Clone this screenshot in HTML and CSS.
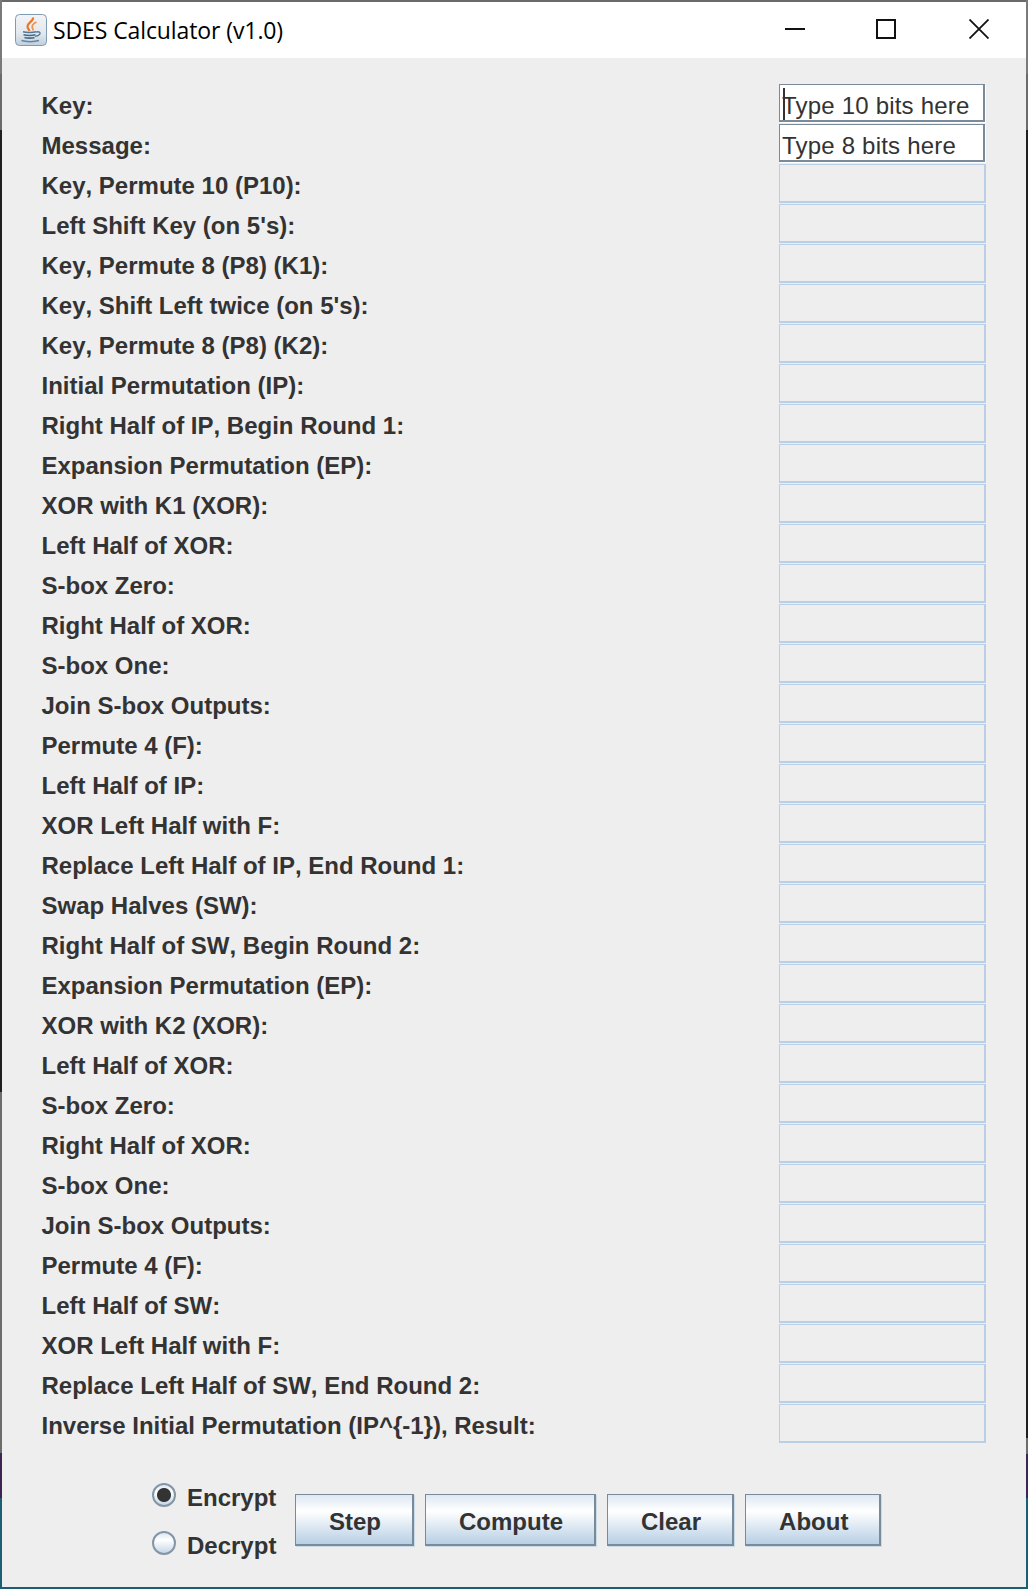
FILE: index.html
```html
<!DOCTYPE html>
<html lang="en">
<head>
<meta charset="utf-8">
<title>SDES Calculator (v1.0)</title>
<link rel="stylesheet" href="styles.css">
</head>
<body>
<div class="window">
  <header class="titlebar">
    <svg class="app-icon" viewBox="0 0 32 32" aria-hidden="true">
      <defs>
        <linearGradient id="tile" x1="0" y1="0" x2="0" y2="1">
          <stop offset="0" stop-color="#f2f4f6"/>
          <stop offset="0.6" stop-color="#e4e9ed"/>
          <stop offset="1" stop-color="#c0cfdc"/>
        </linearGradient>
      </defs>
      <rect x="0.5" y="0.5" width="31" height="31" rx="4" fill="url(#tile)" stroke="#7f9bb2"/>
      <path d="M18 3.500c1 3.500-5.500 5-5.500 9 0 2 1.500 3 2 4.500" fill="none" stroke="#e8762b" stroke-width="2.200"/>
      <path d="M21.500 8c-3 1.500-4.500 3-4.300 5 .1 1.300 1 2 1 3.500" fill="none" stroke="#ef9350" stroke-width="1.800"/>
      <path d="M8 17.800c3 1 10 1 13 0" fill="none" stroke="#4f7797" stroke-width="1.500"/>
      <path d="M8.500 20.700c3 .8 9 .8 12 0" fill="none" stroke="#45698a" stroke-width="1.500"/>
      <path d="M9.500 23.500c2.500.8 8 .8 10 0" fill="none" stroke="#45698a" stroke-width="1.600"/>
      <path d="M21 18.200c2.800-1.200 5 .2 3.600 2.200-.9 1.300-2.800 1.800-4.600 2" fill="none" stroke="#4f7797" stroke-width="1.300"/>
      <path d="M6.500 26.500c4.500 1.500 13 1.500 17.500 0" fill="none" stroke="#5f87a6" stroke-width="1.500"/>
    </svg>
    <h1 class="title">SDES Calculator (v1.0)</h1>
    <div class="controls" aria-hidden="true">
      <svg class="ctl" viewBox="0 0 20 20"><path d="M0 10h20" stroke="#111" stroke-width="2" fill="none"/></svg>
      <svg class="ctl" viewBox="0 0 20 20"><rect x="1" y="1" width="18" height="18" stroke="#111" stroke-width="2" fill="none"/></svg>
      <svg class="ctl" viewBox="0 0 20 20"><path d="M0.500 0.500l19 19M19.500 0.500l-19 19" stroke="#111" stroke-width="1.800" fill="none"/></svg>
    </div>
  </header>
  <main class="content">
    <div class="rows">
      <div class="row"><label class="lbl">Key:</label><div class="wrap"><input class="field edit" type="text" value="Type 10 bits here" aria-label="Key"><span class="caret"></span></div></div>
      <div class="row"><label class="lbl">Message:</label><div class="wrap"><input class="field edit" type="text" value="Type 8 bits here" aria-label="Message"></div></div>
      <div class="row"><label class="lbl">Key, Permute 10 (P10):</label><input class="field off" disabled></div>
      <div class="row"><label class="lbl">Left Shift Key (on 5's):</label><input class="field off" disabled></div>
      <div class="row"><label class="lbl">Key, Permute 8 (P8) (K1):</label><input class="field off" disabled></div>
      <div class="row"><label class="lbl">Key, Shift Left twice (on 5's):</label><input class="field off" disabled></div>
      <div class="row"><label class="lbl">Key, Permute 8 (P8) (K2):</label><input class="field off" disabled></div>
      <div class="row"><label class="lbl">Initial Permutation (IP):</label><input class="field off" disabled></div>
      <div class="row"><label class="lbl">Right Half of IP, Begin Round 1:</label><input class="field off" disabled></div>
      <div class="row"><label class="lbl">Expansion Permutation (EP):</label><input class="field off" disabled></div>
      <div class="row"><label class="lbl">XOR with K1 (XOR):</label><input class="field off" disabled></div>
      <div class="row"><label class="lbl">Left Half of XOR:</label><input class="field off" disabled></div>
      <div class="row"><label class="lbl">S-box Zero:</label><input class="field off" disabled></div>
      <div class="row"><label class="lbl">Right Half of XOR:</label><input class="field off" disabled></div>
      <div class="row"><label class="lbl">S-box One:</label><input class="field off" disabled></div>
      <div class="row"><label class="lbl">Join S-box Outputs:</label><input class="field off" disabled></div>
      <div class="row"><label class="lbl">Permute 4 (F):</label><input class="field off" disabled></div>
      <div class="row"><label class="lbl">Left Half of IP:</label><input class="field off" disabled></div>
      <div class="row"><label class="lbl">XOR Left Half with F:</label><input class="field off" disabled></div>
      <div class="row"><label class="lbl">Replace Left Half of IP, End Round 1:</label><input class="field off" disabled></div>
      <div class="row"><label class="lbl">Swap Halves (SW):</label><input class="field off" disabled></div>
      <div class="row"><label class="lbl">Right Half of SW, Begin Round 2:</label><input class="field off" disabled></div>
      <div class="row"><label class="lbl">Expansion Permutation (EP):</label><input class="field off" disabled></div>
      <div class="row"><label class="lbl">XOR with K2 (XOR):</label><input class="field off" disabled></div>
      <div class="row"><label class="lbl">Left Half of XOR:</label><input class="field off" disabled></div>
      <div class="row"><label class="lbl">S-box Zero:</label><input class="field off" disabled></div>
      <div class="row"><label class="lbl">Right Half of XOR:</label><input class="field off" disabled></div>
      <div class="row"><label class="lbl">S-box One:</label><input class="field off" disabled></div>
      <div class="row"><label class="lbl">Join S-box Outputs:</label><input class="field off" disabled></div>
      <div class="row"><label class="lbl">Permute 4 (F):</label><input class="field off" disabled></div>
      <div class="row"><label class="lbl">Left Half of SW:</label><input class="field off" disabled></div>
      <div class="row"><label class="lbl">XOR Left Half with F:</label><input class="field off" disabled></div>
      <div class="row"><label class="lbl">Replace Left Half of SW, End Round 2:</label><input class="field off" disabled></div>
      <div class="row"><label class="lbl">Inverse Initial Permutation (IP^{-1}), Result:</label><input class="field off" disabled></div>
    </div>
    <footer class="footer">
      <div class="modes">
        <label class="mode"><input class="radio" type="radio" name="mode" checked><span class="mode-text">Encrypt</span></label>
        <label class="mode"><input class="radio" type="radio" name="mode"><span class="mode-text">Decrypt</span></label>
      </div>
      <div class="actions">
        <button class="btn" type="button">Step</button>
        <button class="btn" type="button">Compute</button>
        <button class="btn" type="button">Clear</button>
        <button class="btn" type="button">About</button>
      </div>
    </footer>
  </main>
</div>
</body>
</html>
```
FILE: styles.css
```css
* { box-sizing: border-box; font-kerning: none; }
html, body { margin: 0; height: 1589px; overflow: hidden; }
body {
  padding: 2px;
  background-color: #6a6a6a;
  background-image:
    linear-gradient(to bottom, #7a7a7a 0 74px, #6a6a6a 74px 130px, #1f1f1f 130px 1092px, #6c6c6c 1092px 1453px, #3e2450 1453px 1498px, #1c5f75 1498px),
    linear-gradient(to bottom, #7a7a7a 0 74px, #6a6a6a 74px 130px, #1f1f1f 130px 1438px, #6c6c6c 1438px 1454px, #3e2450 1454px 1498px, #1c5f75 1498px),
    linear-gradient(#1c5f75, #1c5f75);
  background-size: 2px 100%, 2px 100%, 100% 2px;
  background-position: left top, right top, left bottom;
  background-repeat: no-repeat;
  font-family: "Liberation Sans", Arial, sans-serif;
  color: #333;
}
.window { height: 1585px; background: #eee; display: flex; flex-direction: column; }
.titlebar { height: 56px; background: #fff; display: flex; align-items: center; padding-left: 13px; }
.app-icon { width: 32px; height: 32px; flex: none; margin-top: -1px; }
.title { margin: 0 0 0 6px; font: 400 23px "Open Sans", "Noto Sans", sans-serif; letter-spacing: -0.1px; color: #000; white-space: nowrap; }
.controls { margin-left: auto; display: flex; gap: 71px; padding-right: 37px; margin-top: -3px; }
.ctl { width: 20px; height: 20px; display: block; }
.ctl:last-child { margin-left: 2px; }
.content { flex: 1; padding: 26px 40px 0 39.5px; display: flex; flex-direction: column; }
.rows { display: flex; flex-direction: column; }
.row { height: 40px; display: flex; justify-content: space-between; align-items: flex-start; }
.lbl { font-size: 24px; font-weight: 700; line-height: 44px; white-space: nowrap; }
.wrap { position: relative; display: block; width: 207px; height: 39px; }
.field { display: block; width: 207px; height: 39px; padding: 0; margin: 0; outline: 0; border-radius: 0; }
.edit {
  width: 206px; height: 38px; padding: 7px 0 0 2px;
  background: #fff; color: #333; font: 400 24px "Liberation Sans", Arial, sans-serif; letter-spacing: 0.2px;
  border-style: solid; border-color: #7a8a99; border-width: 1px 2px 2px 1px;
  box-shadow: 1px 1px 0 #fff;
}
.off { background: #eee; border-style: solid; border-color: #b8cfe5; border-width: 1px 2px 2px 1px; }
.caret { position: absolute; left: 4px; top: 4px; width: 2px; height: 32px; background: #333; }
.footer { display: flex; align-items: flex-end; margin-top: 27px; padding-left: 110.5px; }
.modes { display: flex; flex-direction: column; width: 143px; }
.mode { height: 48px; display: flex; align-items: center; gap: 11px; font-size: 24px; font-weight: 700; }
.mode-text { padding-top: 6px; }
.radio {
  appearance: none; width: 24px; height: 24px; margin: 0; flex: none; border-radius: 50%;
  border: 2px solid #8496a6;
  background: linear-gradient(to bottom, #dde8f3, #fff 35%, #c5d6e6);
}
.radio:checked { background: radial-gradient(circle, #333 0 6.5px, transparent 7.500px), linear-gradient(to bottom, #dde8f3, #fff 35%, #c5d6e6); }
.actions { display: flex; gap: 11px; margin-bottom: 21px; }
.btn {
  height: 52px; padding: 4px 31px 0 33px; font: 700 24px "Liberation Sans", Arial, sans-serif; color: #333;
  border-style: solid; border-color: #7a8a99; border-width: 1px 2px 2px 1px; border-radius: 0;
  background: linear-gradient(to bottom, #dde8f3, #fff 33%, #b8cfe5);
  box-shadow: 1px 1px 0 #c9dae9;
}
```
